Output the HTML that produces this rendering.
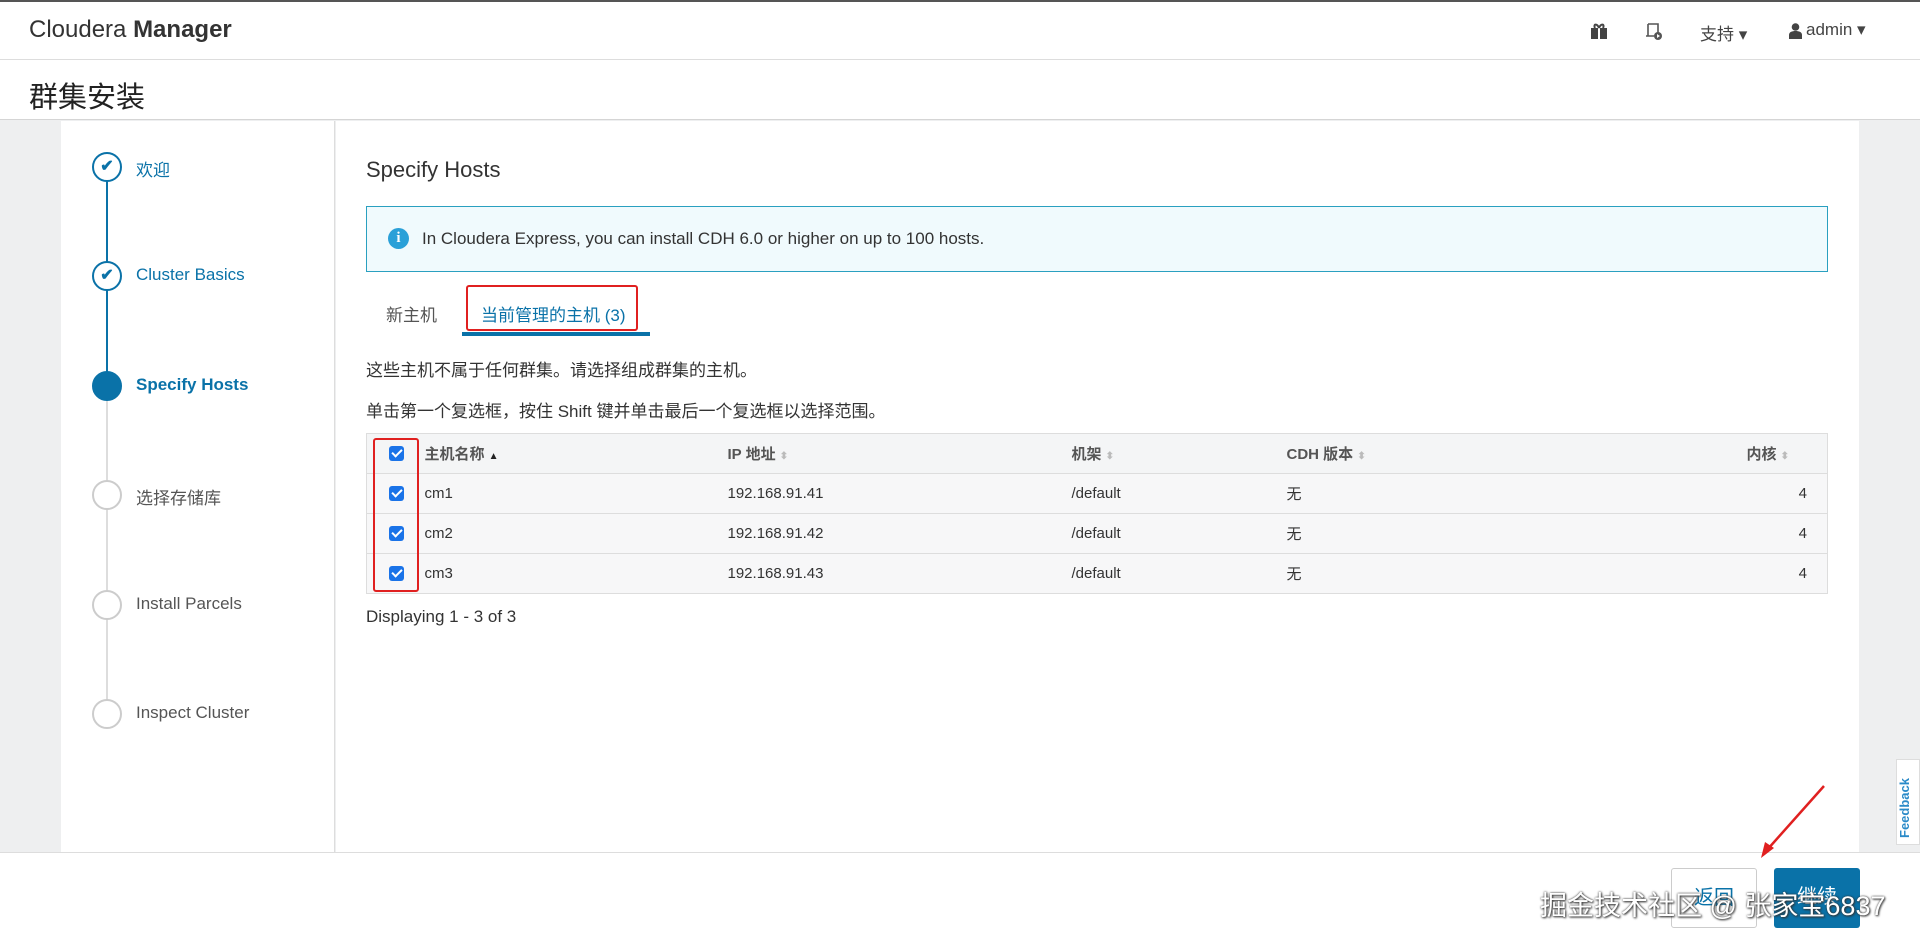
<!DOCTYPE html>
<html><head><meta charset="utf-8"><style>
*{box-sizing:border-box;margin:0;padding:0}
body{width:1920px;height:942px;overflow:hidden;background:#eeeff0;font-family:"Liberation Sans","Noto Sans CJK SC",sans-serif;color:#333;position:relative}
.a{position:absolute}
.top{left:0;top:0;width:1920px;height:60px;background:#fff;border-bottom:1px solid #ddd;border-top:2px solid #555}
.hdr{left:0;top:60px;width:1920px;height:60px;background:#fff;border-bottom:1px solid #d5d5d5}
.side{left:61px;top:121px;width:274px;height:731px;background:#fff;border-right:1px solid #ddd}
.main{left:336px;top:121px;width:1523px;height:731px;background:#fff}
.foot{left:0;top:852px;width:1920px;height:90px;background:#fff;border-top:1px solid #ddd}
.circ{width:30px;height:30px;border-radius:50%;border:2px solid #0a72a8;background:#fff;left:92px}
.circ.g{border-color:#ccc}
.circ.f{background:#0a72a8}
.lbl{left:136px;font-size:17px;color:#0a72a8}
.lbl.g{color:#555}
td,th{height:40px;font-size:15px;text-align:left;border-bottom:1px solid #ddd;font-weight:normal}
th{font-weight:bold;color:#555;background:#f4f5f6}
tr.r td{background:#f7f7f8}
.cb{display:inline-block;width:15px;height:15px;background:#1a73e8;border-radius:3px;position:relative;top:2px}
.cb:after{content:"";position:absolute;left:5px;top:1px;width:4px;height:8px;border:solid #fff;border-width:0 2px 2px 0;transform:rotate(45deg)}
.s{color:#bbb;font-size:10px}
</style></head><body>
<div class="a top"></div>
<div class="a" style="left:29px;top:16px;font-size:24px;color:#333">Cloudera <b style="font-weight:bold">Manager</b></div>
<svg class="a" style="left:1590px;top:22px" width="18" height="18" viewBox="0 0 18 18"><rect x="1" y="6" width="16" height="11" fill="#444"/><rect x="8" y="6" width="2" height="11" fill="#fff"/><path d="M9 6C7 1 3 2 5 6M9 6c2-5 6-4 4 0" stroke="#444" stroke-width="2" fill="none"/></svg>
<svg class="a" style="left:1643px;top:21px" width="20" height="20" viewBox="0 0 20 20"><path d="M5 3h10v10M5 3v12h6M3 15h8" stroke="#555" stroke-width="1.6" fill="none"/><circle cx="15" cy="15" r="4" fill="#555"/><path d="M14 13l3 2-3 2z" fill="#fff"/></svg>
<div class="a" style="left:1700px;top:20px;font-size:17px;color:#444">支持 ▾</div>
<svg class="a" style="left:1789px;top:23px" width="13" height="16" viewBox="0 0 13 16"><circle cx="6.5" cy="4" r="3.8" fill="#444"/><path d="M0 16v-4c0-3 3-4 6.5-4s6.5 1 6.5 4v4z" fill="#444"/></svg>
<div class="a" style="left:1806px;top:20px;font-size:17px;color:#444">admin ▾</div>
<div class="a hdr"></div>
<div class="a" style="left:29px;top:74px;font-size:29px;color:#222">群集安装</div>
<div class="a side"></div>
<div class="a main"></div>
<div class="a" style="left:106px;top:167px;width:2px;height:535px;background:#0a72a8"></div>
<div class="a" style="left:106px;top:390px;width:2px;height:320px;background:#ddd"></div>
<div class="a circ" style="top:152px;color:#0a72a8;font-size:16px;text-align:center;line-height:26px;font-weight:bold">✔</div>
<div class="a lbl" style="top:156px">欢迎</div>
<div class="a circ" style="top:261px;color:#0a72a8;font-size:16px;text-align:center;line-height:26px;font-weight:bold">✔</div>
<div class="a lbl" style="top:265px">Cluster Basics</div>
<div class="a circ f" style="top:371px"></div>
<div class="a lbl" style="top:375px;font-weight:bold">Specify Hosts</div>
<div class="a circ g" style="top:480px"></div>
<div class="a lbl g" style="top:484px">选择存储库</div>
<div class="a circ g" style="top:590px"></div>
<div class="a lbl g" style="top:594px">Install Parcels</div>
<div class="a circ g" style="top:699px"></div>
<div class="a lbl g" style="top:703px">Inspect Cluster</div>

<div class="a" style="left:366px;top:157px;font-size:22px;color:#333">Specify Hosts</div>
<div class="a" style="left:366px;top:206px;width:1462px;height:66px;border:1px solid #2aa0c0;background:#f0fafd"></div>
<div class="a" style="left:388px;top:228px;width:21px;height:21px;border-radius:50%;background:#2aa0d8;color:#fff;font-weight:bold;font-size:15px;text-align:center;line-height:21px;font-family:'Liberation Serif',serif">i</div>
<div class="a" style="left:422px;top:229px;font-size:17px">In Cloudera Express, you can install CDH 6.0 or higher on up to 100 hosts.</div>
<div class="a" style="left:386px;top:301px;font-size:17px;color:#555">新主机</div>
<div class="a" style="left:481px;top:301px;font-size:17px;color:#0a72a8">当前管理的主机 (3)</div>
<div class="a" style="left:462px;top:332px;width:188px;height:4px;background:#0a72a8"></div>
<div class="a" style="left:466px;top:285px;width:172px;height:46px;border:2px solid #e02020;border-radius:3px"></div>
<div class="a" style="left:366px;top:356px;font-size:17px">这些主机不属于任何群集。请选择组成群集的主机。</div>
<div class="a" style="left:366px;top:397px;font-size:17px">单击第一个复选框，按住 Shift 键并单击最后一个复选框以选择范围。</div>
<table class="a" style="left:366px;top:433px;width:1462px;border-collapse:collapse;border:1px solid #ddd">
<tr><th style="width:58px;padding-left:22px"><span class="cb"></span></th><th style="width:303px">主机名称 <span style="font-size:10px;color:#222">▲</span></th><th style="width:344px">IP 地址 <span class="s">⬍</span></th><th style="width:215px">机架 <span class="s">⬍</span></th><th>CDH 版本 <span class="s">⬍</span></th><th style="text-align:right;padding-right:38px">内核 <span class="s">⬍</span></th></tr>
<tr class="r"><td style="padding-left:22px"><span class="cb"></span></td><td>cm1</td><td>192.168.91.41</td><td>/default</td><td>无</td><td style="text-align:right;padding-right:20px">4</td></tr>
<tr class="r"><td style="padding-left:22px"><span class="cb"></span></td><td>cm2</td><td>192.168.91.42</td><td>/default</td><td>无</td><td style="text-align:right;padding-right:20px">4</td></tr>
<tr class="r"><td style="padding-left:22px"><span class="cb"></span></td><td>cm3</td><td>192.168.91.43</td><td>/default</td><td>无</td><td style="text-align:right;padding-right:20px">4</td></tr>
</table>
<div class="a" style="left:373px;top:438px;width:46px;height:154px;border:2px solid #e02020;border-radius:3px"></div>
<div class="a" style="left:366px;top:607px;font-size:17px">Displaying 1 - 3 of 3</div>
<div class="a" style="left:1896px;top:759px;width:24px;height:86px;background:#fff;border:1px solid #ddd"></div>
<div class="a" style="left:1897px;top:838px;transform:rotate(-90deg);transform-origin:0 0;font-size:13px;color:#2a8ac8;font-weight:bold">Feedback</div>
<div class="a foot"></div>
<div class="a" style="left:1671px;top:868px;width:86px;height:60px;border:1px solid #ccc;border-radius:3px;background:#fff;color:#0a72a8;font-size:20px;text-align:center;line-height:58px">返回</div>
<div class="a" style="left:1774px;top:868px;width:86px;height:60px;border-radius:3px;background:#0a72a8;color:#fff;font-size:20px;text-align:center;line-height:58px">继续</div>
<div class="a" style="left:1540px;top:884px;font-size:27px;color:#fff;text-shadow:0 0 2px #333,1px 1px 2px #333">掘金技术社区 @ 张家宝6837</div>
<svg class="a" style="left:1755px;top:780px" width="80" height="85"><path d="M69 6L12 70" stroke="#e02020" stroke-width="2.5"/><path d="M6 78l4-16 9 6z" fill="#e02020"/></svg>
</body></html>
